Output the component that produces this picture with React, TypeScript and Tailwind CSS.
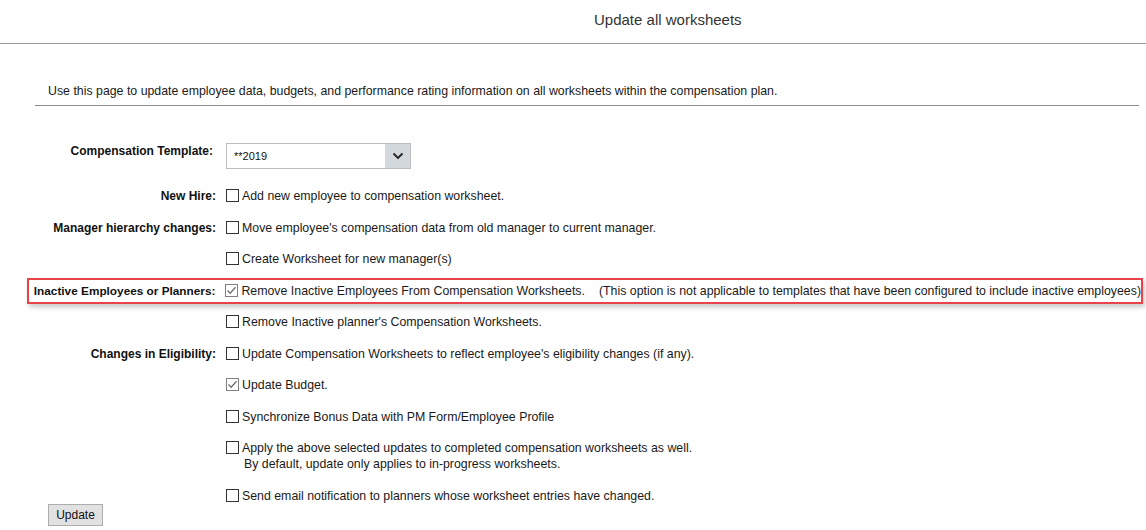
import React from "react"

type Row = {
  label?: string
  text: string
  sub?: string
  checked?: boolean
}

const rows: Row[] = [
  { label: "New Hire:", text: "Add new employee to compensation worksheet." },
  { label: "Manager hierarchy changes:", text: "Move employee's compensation data from old manager to current manager." },
  { text: "Create Worksheet for new manager(s)" },
  { label: "Inactive Employees or Planners:", text: "Remove Inactive Employees From Compensation Worksheets.", checked: true },
  { text: "Remove Inactive planner's Compensation Worksheets." },
  { label: "Changes in Eligibility:", text: "Update Compensation Worksheets to reflect employee's eligibility changes (if any)." },
  { text: "Update Budget.", checked: true },
  { text: "Synchronize Bonus Data with PM Form/Employee Profile" },
  {
    text: "Apply the above selected updates to completed compensation worksheets as well.",
    sub: "By default, update only applies to in-progress worksheets.",
  },
  { text: "Send email notification to planners whose worksheet entries have changed." },
]

function Box({ checked }: { checked?: boolean }) {
  if (checked) {
    return (
      <span className="block w-[13px] h-[13px] border border-[#808080] bg-white flex items-center justify-center shrink-0">
        <svg width="11" height="11" viewBox="0 0 11 11">
          <path d="M1.5 5.5 L4.2 8.2 L9.5 2.2" fill="none" stroke="#6e6e6e" strokeWidth="1.3" />
        </svg>
      </span>
    )
  }
  return <span className="block w-[13px] h-[13px] border border-[#333] bg-white shrink-0" />
}

export default function App() {
  return (
    <div className="w-[1146px] h-[530px] overflow-hidden bg-white text-[12.35px] leading-[16px] text-[#1a1a1a] font-['Liberation_Sans',Arial,sans-serif]">
      <header className="h-[44px] border-b border-[#9a9a9a] pt-[11px] pl-[594px]">
        <h1 className="text-[15px] leading-[18px] text-[#333]">Update all worksheets</h1>
      </header>

      <div className="ml-[35px] w-[1104px] mt-[39px] pb-[6px] pl-[13px] border-b border-[#8c8c8c]">
        Use this page to update employee data, budgets, and performance rating information on all worksheets within the compensation plan.
      </div>

      <div className="mt-[37px] flex items-start">
        <div className="w-[216px] pr-[3px] text-right font-bold text-[12px] text-[#111]">Compensation Template:</div>
        <div className="ml-[10px] w-[185px] h-[26px] border border-[#bdbdbd] flex">
          <div className="flex-1 pl-[7px] flex items-center text-[11px] text-[#111]">**2019</div>
          <div className="w-[25px] bg-[#d3d8dd] flex items-center justify-center">
            <svg width="12" height="8" viewBox="0 0 12 8">
              <path d="M1.5 1.5 L6 6 L10.5 1.5" fill="none" stroke="#222" strokeWidth="1.8" />
            </svg>
          </div>
        </div>
      </div>

      <div className="mt-[19px] flex flex-col gap-[15.5px]">
        {rows.map((row, i) => {
          const line = (
            <div className="flex items-start">
              <div className="pt-[1px]">
                <Box checked={row.checked} />
              </div>
              <div className="ml-[3px]">
                <div className="whitespace-nowrap">
                  {row.text}
                  {i === 3 && (
                    <span className="ml-[14px]">
                      (This option is not applicable to templates that have been configured to include inactive employees)
                    </span>
                  )}
                </div>
                {row.sub && <div className="pl-[2px]">{row.sub}</div>}
              </div>
            </div>
          )
          if (i === 3) {
            return (
              <div
                key={i}
                className="ml-[27px] w-[1116px] h-[26px] -my-[5px] border-2 border-[#e8434a] flex items-center shadow-[2px_3px_5px_rgba(0,0,0,0.22)]"
              >
                <div className="w-[187px] text-right font-bold text-[11.8px] text-[#111]">{row.label}</div>
                <div className="ml-[10px]">{line}</div>
              </div>
            )
          }
          return (
            <div key={i} className="flex items-start">
              <div className="w-[216px] text-right font-bold text-[12px] text-[#111]">{row.label}</div>
              <div className="ml-[10px]">{line}</div>
            </div>
          )
        })}
      </div>

      <button className="block ml-[48px] mt-0 w-[55px] h-[22px] bg-[#e1e1e1] border border-[#adadad] text-[12px] leading-[16px] text-[#111]">
        Update
      </button>
    </div>
  )
}
